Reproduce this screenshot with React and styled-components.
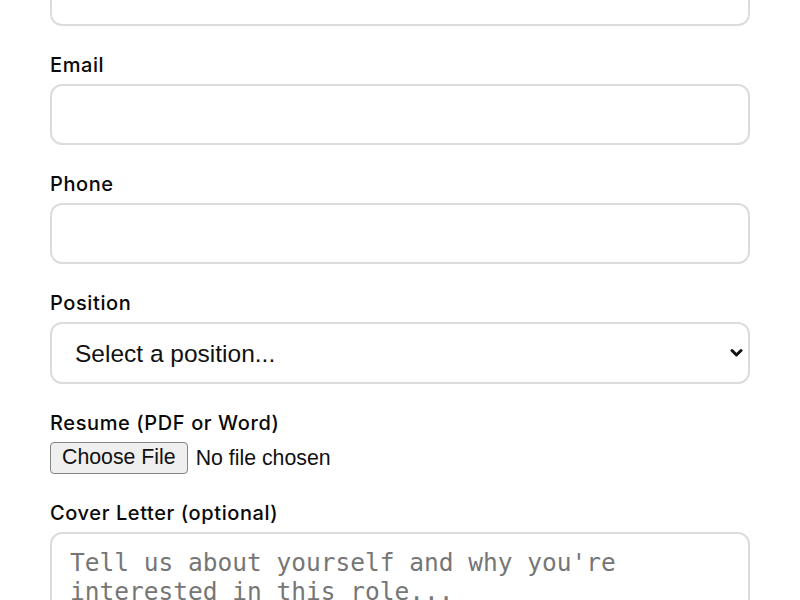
import styled, { createGlobalStyle } from 'styled-components';

const GlobalStyle = createGlobalStyle`
	html, body {
		margin: 0;
		padding: 0;
		background: #ffffff;
		overflow: hidden;
	}
	body {
		font-family: Inter, 'Noto Sans', sans-serif;
		color: #111111;
	}
`;

const Page = styled.div`
	width: 700px;
	margin: 0 auto;
	/* the page is scrolled: the name field sits mostly above the fold */
	margin-top: -66px;
`;

const Form = styled.form`
	display: flex;
	flex-direction: column;
	gap: 27px;
`;

const Group = styled.div`
	display: flex;
	flex-direction: column;
`;

const Label = styled.label`
	font-family: Inter, 'Noto Sans', sans-serif;
	font-size: 20px;
	font-weight: 500;
	letter-spacing: 0.6px;
	line-height: 24px;
	color: #0a0a0a;
	margin-bottom: 7px;
`;

const fieldBase = `
	box-sizing: border-box;
	width: 100%;
	border: 2px solid #dcdcdc;
	border-radius: 12px;
	background: #ffffff;
	outline: none;
`;

const Input = styled.input`
	${fieldBase}
	height: 61px;
	padding: 0 16px;
	font-family: 'Liberation Sans', Arial, sans-serif;
	font-size: 20px;
`;

const SelectWrap = styled.div`
	position: relative;
`;

const Select = styled.select`
	${fieldBase}
	height: 62px;
	padding: 0 40px 0 23px;
	appearance: none;
	-webkit-appearance: none;
	font-family: 'Liberation Sans', Arial, sans-serif;
	font-size: 24.5px;
	color: #111111;
`;

const Chevron = styled.svg`
	position: absolute;
	right: 7px;
	top: 50%;
	width: 13px;
	height: 10px;
	transform: translateY(-50%);
	pointer-events: none;
`;

const FileRow = styled.div`
	display: flex;
	align-items: center;
	gap: 8px;
	font-family: 'Liberation Sans', Arial, sans-serif;
	font-size: 21.3px;
`;

const FileButton = styled.button`
	box-sizing: border-box;
	height: 32px;
	padding: 0 11px;
	background: #efefef;
	border: 1px solid #858585;
	border-radius: 4px;
	font-family: 'Liberation Sans', Arial, sans-serif;
	font-size: 21.3px;
	color: #111111;
	line-height: 1;
`;

const FileName = styled.span`
	color: #111111;
`;

const TextArea = styled.textarea`
	${fieldBase}
	height: 160px;
	padding: 15px 18px;
	resize: vertical;
	font-family: 'DejaVu Sans Mono', 'Liberation Mono', monospace;
	font-size: 24.5px;
	line-height: 28.5px;
	&::placeholder {
		color: #767676;
	}
`;

const App = () => {
	return (
		<Page>
			<GlobalStyle />
			<Form>
				<Group>
					<Label htmlFor="name">Full Name</Label>
					<Input id="name" type="text" />
				</Group>
				<Group>
					<Label htmlFor="email">Email</Label>
					<Input id="email" type="email" />
				</Group>
				<Group>
					<Label htmlFor="phone">Phone</Label>
					<Input id="phone" type="tel" />
				</Group>
				<Group>
					<Label htmlFor="position">Position</Label>
					<SelectWrap>
						<Select id="position" defaultValue="">
							<option value="">Select a position...</option>
							<option value="eng">Engineer</option>
							<option value="design">Designer</option>
						</Select>
						<Chevron viewBox="0 0 13 10">
							<polyline points="2,2.5 6.5,7 11,2.5" fill="none" stroke="#111" strokeWidth="3" strokeLinecap="round" strokeLinejoin="round" />
						</Chevron>
					</SelectWrap>
				</Group>
				<Group>
					<Label>Resume (PDF or Word)</Label>
					<FileRow>
						<FileButton type="button">Choose File</FileButton>
						<FileName>No file chosen</FileName>
					</FileRow>
				</Group>
				<Group>
					<Label htmlFor="cover">Cover Letter (optional)</Label>
					<TextArea id="cover" placeholder="Tell us about yourself and why you're interested in this role..." />
				</Group>
			</Form>
		</Page>
	);
};

export default App;
